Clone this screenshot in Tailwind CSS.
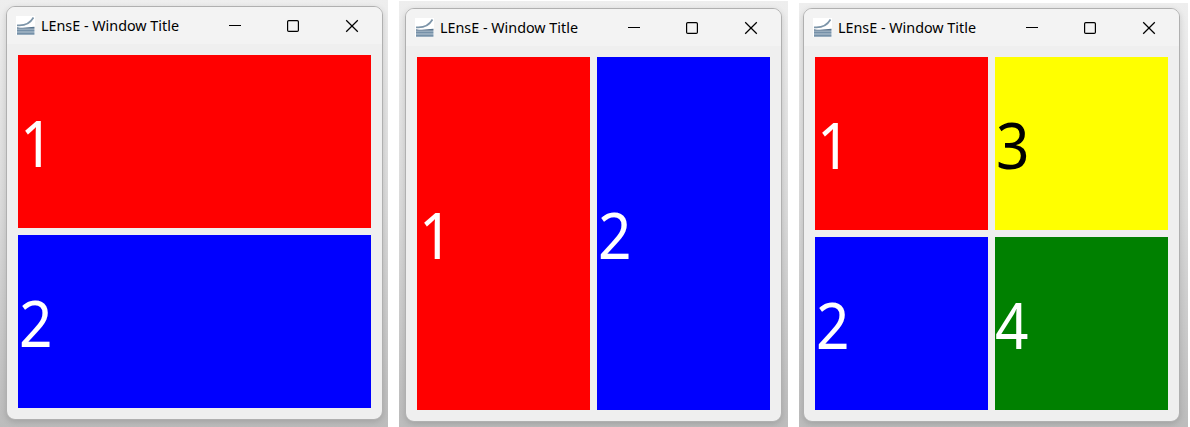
<!DOCTYPE html>
<html lang="en">
<head>
<meta charset="utf-8">
<title>LEnsE - Window Title</title>
<script src="https://cdn.jsdelivr.net/npm/@tailwindcss/browser@4"></script>
</head>
<body class="w-[1190px] h-[427px] overflow-hidden bg-white font-['Noto_Sans',sans-serif]">
<svg width="0" height="0" class="absolute">
  <defs>
    <symbol id="logo" viewBox="0 0 19 19">
      <rect width="19" height="19" fill="#fff"/>
      <path d="M1 9.3C8 10 14 7.5 17.5 1.5" fill="none" stroke="#7d95a9" stroke-width="1.7"/>
      <path d="M1 11.2C7 12.3 12 11.4 18.5 10.8V12.7H1Z" fill="#58748e"/>
      <path d="M1 13.3H18.5V15.7H1Z" fill="#7590a8"/>
      <path d="M1 16.2H18.5V18.7H1Z" fill="#7590a8"/>
    </symbol>
    <symbol id="min" viewBox="0 0 14 14"><path d="M1 6.5H13" stroke="#000"/></symbol>
    <symbol id="max" viewBox="0 0 14 14"><rect x="1.6" y="1.6" width="10.8" height="10.8" rx="1.2" fill="none" stroke="#000" stroke-width="1.2"/></symbol>
    <symbol id="close" viewBox="0 0 14 14"><path d="M1.2 1.2L12.8 12.8M12.8 1.2L1.2 12.8" stroke="#000" stroke-width="1.25"/></symbol>
  </defs>
</svg>
<main class="flex h-full items-end">
  <section class="w-[388px] h-[427px] shrink-0 overflow-hidden pl-[6px] pt-[6px] bg-linear-to-b from-[#eeeeee] via-[#dadada] to-[#bcbcbc]">
    <div class="w-[377px] h-[414px] rounded-[9px] border border-[#b0b0b0] bg-[#efefef] overflow-hidden shadow-[0_2px_6px_rgba(0,0,0,0.15)]">
      <header class="h-[37px] bg-[#f3f3f3] flex items-center pl-[9px] pr-[23px]">
        <svg class="size-[19px] shrink-0 -mt-[1px]"><use href="#logo"/></svg>
        <svg class="ml-[6px] w-[160px] h-[24px] shrink-0"><text x="0" y="17" font-size="14.7" textLength="138" lengthAdjust="spacingAndGlyphs">LEnsE - Window Title</text></svg>
        <svg class="ml-auto size-[14px]"><use href="#min"/></svg>
        <svg class="ml-[44px] size-[14px]"><use href="#max"/></svg>
        <svg class="ml-[45px] size-[14px]"><use href="#close"/></svg>
      </header>
      <div class="mt-[11px] ml-[11px] w-[353px] h-[353px] grid grid-rows-2 gap-[7px] text-[63px] leading-none text-white">
        <div class="bg-[#ff0000] flex items-center pt-[2px] pl-[1px]"><span class="origin-left scale-x-[0.93] pl-[1px]">1</span></div>
        <div class="bg-[#0000ff] flex items-center pt-[2px] pl-[1px]"><span class="origin-left scale-x-[0.93]">2</span></div>
      </div>
    </div>
  </section>
  <section class="ml-[11px] w-[389px] h-[426px] shrink-0 overflow-hidden pl-[6px] pt-[7px] bg-linear-to-b from-[#eeeeee] via-[#dadada] to-[#bcbcbc]">
    <div class="w-[377px] h-[414px] rounded-[9px] border border-[#b0b0b0] bg-[#efefef] overflow-hidden shadow-[0_2px_6px_rgba(0,0,0,0.15)]">
      <header class="h-[37px] bg-[#f3f3f3] flex items-center pl-[9px] pr-[23px]">
        <svg class="size-[19px] shrink-0 -mt-[1px]"><use href="#logo"/></svg>
        <svg class="ml-[6px] w-[160px] h-[24px] shrink-0"><text x="0" y="17" font-size="14.7" textLength="138" lengthAdjust="spacingAndGlyphs">LEnsE - Window Title</text></svg>
        <svg class="ml-auto size-[14px]"><use href="#min"/></svg>
        <svg class="ml-[44px] size-[14px]"><use href="#max"/></svg>
        <svg class="ml-[45px] size-[14px]"><use href="#close"/></svg>
      </header>
      <div class="mt-[11px] ml-[11px] w-[353px] h-[353px] grid grid-cols-2 gap-[7px] text-[63px] leading-none text-white">
        <div class="bg-[#ff0000] flex items-center pt-[2px] pl-[1px]"><span class="origin-left scale-x-[0.93] pl-[1px]">1</span></div>
        <div class="bg-[#0000ff] flex items-center pt-[2px] pl-[1px]"><span class="origin-left scale-x-[0.93]">2</span></div>
      </div>
    </div>
  </section>
  <section class="ml-[11px] w-[389px] h-[424px] shrink-0 overflow-hidden pl-[4px] pt-[5px] bg-linear-to-b from-[#eeeeee] via-[#dadada] to-[#bcbcbc]">
    <div class="w-[377px] h-[414px] rounded-[9px] border border-[#b0b0b0] bg-[#efefef] overflow-hidden shadow-[0_2px_6px_rgba(0,0,0,0.15)]">
      <header class="h-[37px] bg-[#f3f3f3] flex items-center pl-[9px] pr-[23px]">
        <svg class="size-[19px] shrink-0 -mt-[1px]"><use href="#logo"/></svg>
        <svg class="ml-[6px] w-[160px] h-[24px] shrink-0"><text x="0" y="17" font-size="14.7" textLength="138" lengthAdjust="spacingAndGlyphs">LEnsE - Window Title</text></svg>
        <svg class="ml-auto size-[14px]"><use href="#min"/></svg>
        <svg class="ml-[44px] size-[14px]"><use href="#max"/></svg>
        <svg class="ml-[45px] size-[14px]"><use href="#close"/></svg>
      </header>
      <div class="mt-[11px] ml-[11px] w-[353px] h-[353px] grid grid-cols-2 grid-rows-2 gap-[7px] text-[63px] leading-none text-white">
        <div class="bg-[#ff0000] flex items-center pt-[2px] pl-[1px]"><span class="origin-left scale-x-[0.93] pl-[1px]">1</span></div>
        <div class="bg-[#ffff00] flex items-center pt-[2px] pl-[1px] text-black"><span class="origin-left scale-x-[0.93]">3</span></div>
        <div class="bg-[#0000ff] flex items-center pt-[2px] pl-[1px]"><span class="origin-left scale-x-[0.93]">2</span></div>
        <div class="bg-[#008000] flex items-center pt-[2px]"><span class="origin-left scale-x-[0.93]">4</span></div>
      </div>
    </div>
  </section>
</main>
</body>
</html>
